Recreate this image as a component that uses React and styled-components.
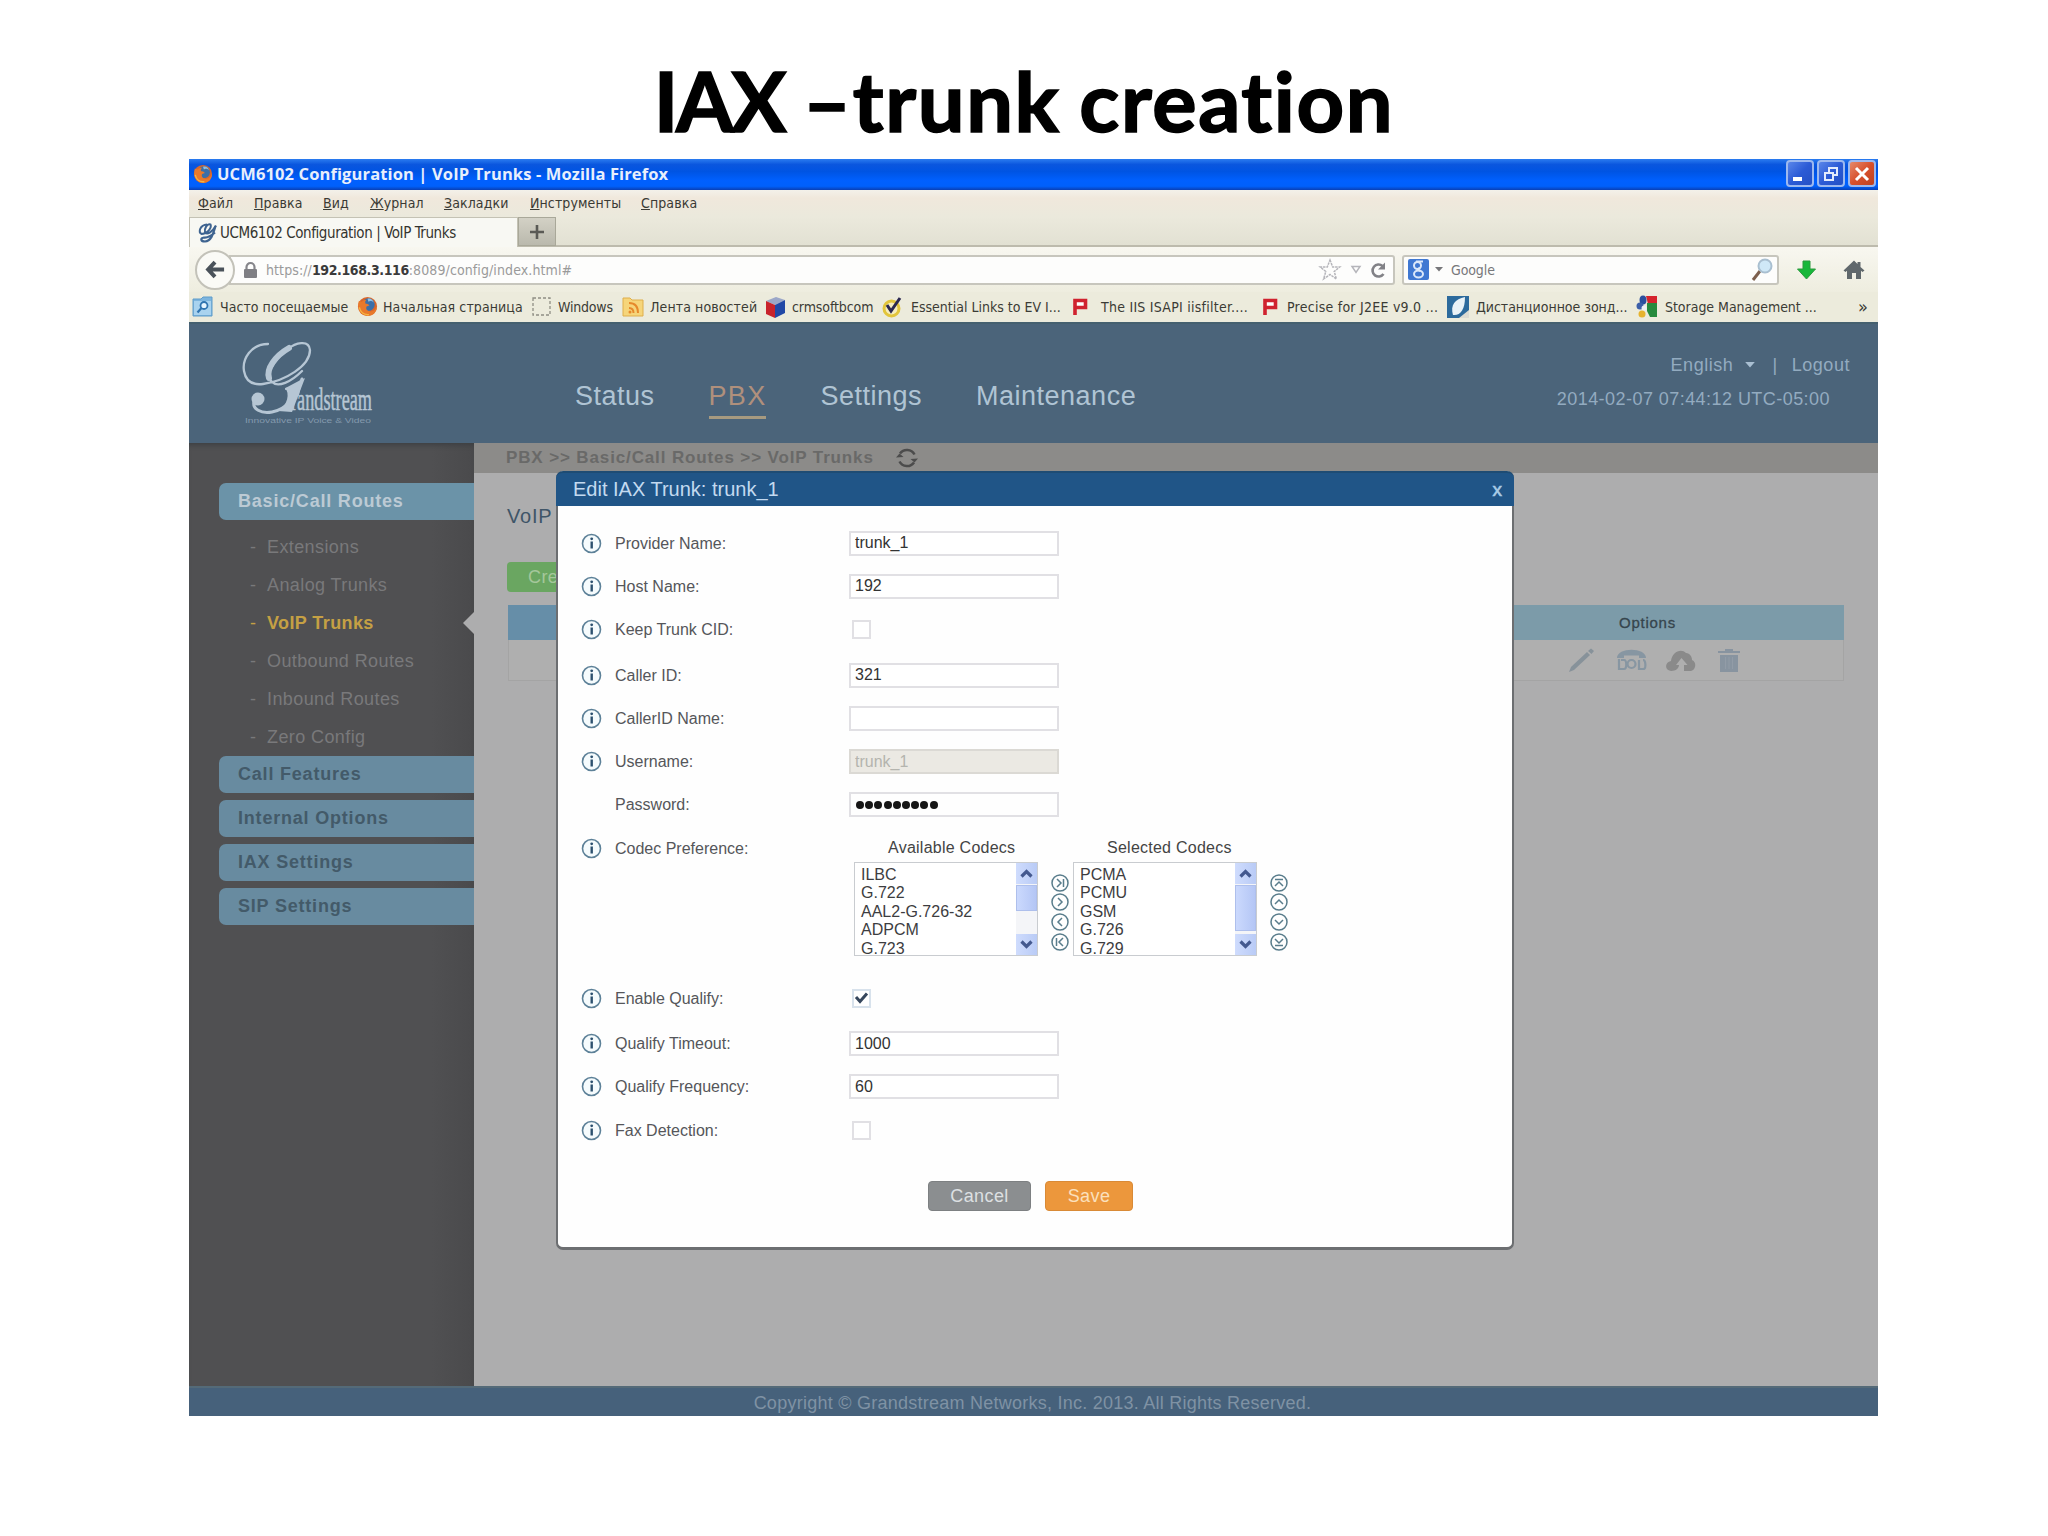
import React, { useState } from 'react';
import styled, { createGlobalStyle, css } from 'styled-components';

const GlobalStyle = createGlobalStyle`
  * { box-sizing: border-box; }
  body { margin: 0; background: #fff; }
  svg { display: block; flex: none; overflow: visible; }
`;

const tahoma = css`
  font-family: 'DejaVu Sans Condensed', 'DejaVu Sans', sans-serif;
  font-stretch: condensed;
`;
const arial = css`
  font-family: 'Liberation Sans', Arial, sans-serif;
`;

const Slide = styled.div`
  width: 2048px;
  height: 1536px;
  overflow: hidden;
  display: flex;
  flex-direction: column;
`;
const SlideTitle = styled.h1`
  margin: 0;
  height: 159px;
  padding-top: 42px;
  text-align: center;
  font: 700 83px/116px Lato, sans-serif;
  letter-spacing: 1.6px;
  word-spacing: -3px;
  color: #000;
  -webkit-text-stroke: 1.6px #000;
  white-space: nowrap;
`;
const Tight = styled.span`
  letter-spacing: -2.5px;
`;

/* ---------- browser ---------- */
const Browser = styled.div`
  position: relative;
  width: 1689px;
  height: 1257px;
  margin-left: 189px;
  display: flex;
  flex-direction: column;
  white-space: nowrap;
`;
const TitleBar = styled.div`
  height: 31px;
  padding: 0 2px 2px 4px;
  display: flex;
  align-items: center;
  background: linear-gradient(#2b7cf0 0, #0a56de 18%, #0054e3 40%, #0060ff 70%, #0060fb 88%, #0a3fb4 100%);
`;
const WindowTitle = styled.div`
  flex: 1;
  margin-left: 4px;
  font: 700 16.5px/28px 'Open Sans', sans-serif;
  letter-spacing: 0.12px;
  color: #e8effc;
`;
const WinButtons = styled.div`
  display: flex;
  gap: 3px;
`;
const WinButton = styled.button`
  width: 28px;
  height: 27px;
  padding: 0;
  display: flex;
  align-items: center;
  justify-content: center;
  border: 2px solid #9db9ef;
  border-radius: 4px;
  background: ${(p) => (p.$close ? 'linear-gradient(135deg, #e58a6c, #d8502c 50%, #bd4120)' : 'linear-gradient(135deg, #5a86ea, #2c5bd6 50%, #2450c4)')};
`;
const MenuBar = styled.div`
  height: 27px;
  padding: 1px 0 0 9px;
  display: flex;
  background: linear-gradient(#f3f1ea 0, #f0e8dc 30%, #ebe9dc 100%);
`;
const MenuItem = styled.div`
  ${tahoma}
  width: ${(p) => p.$w}px;
  font-size: 14px;
  line-height: 24px;
  letter-spacing: 0.1px;
  color: #3a3a34;
  &::first-letter { text-decoration: underline; }
`;
const TabStrip = styled.div`
  height: 30px;
  display: flex;
  background: linear-gradient(#ebe9dc, #e2e1d3);
  border-bottom: 2px solid #bdbbad;
`;
const Tab = styled.div`
  ${tahoma}
  width: 329px;
  height: 30px;
  padding-left: 8px;
  display: flex;
  align-items: center;
  gap: 3px;
  font-size: 15px;
  letter-spacing: -0.42px;
  color: #34342f;
  background: #f8f8f3;
  border: 1px solid #c4c2b4;
  border-bottom: 0;
`;
const NewTab = styled.div`
  width: 38px;
  height: 29px;
  display: flex;
  align-items: center;
  justify-content: center;
  background: linear-gradient(#d3d1c5, #bab9ad);
  border: 1px solid #a9a899;
`;
const NavBar = styled.div`
  height: 45px;
  padding-left: 6px;
  display: flex;
  align-items: center;
  background: linear-gradient(#f8f7f0, #eeeddf);
`;
const BackButton = styled.div`
  width: 40px;
  height: 40px;
  z-index: 1;
  display: flex;
  align-items: center;
  justify-content: center;
  border: 2px solid #c3c2b9;
  border-radius: 50%;
  background: #fafaf6;
`;
const UrlBar = styled.div`
  ${tahoma}
  width: 1166px;
  height: 30px;
  margin-left: -6px;
  padding: 0 7px 0 12px;
  display: flex;
  align-items: center;
  font-size: 14px;
  color: #9a9a9a;
  background: #fdfdfc;
  border: 2px solid #c7c6bd;
  border-radius: 0 3px 3px 0;
  b { color: #3a3a3a; letter-spacing: -0.4px; }
`;
const Address = styled.div`
  flex: 1;
  margin-left: 8px;
  letter-spacing: 0.1px;
`;
const SearchBox = styled(UrlBar)`
  width: 377px;
  margin-left: 7px;
  padding: 0 3px 0 4px;
  color: #77777a;
  border-radius: 3px;
`;
const SearchHint = styled.div`
  flex: 1;
  display: flex;
  align-items: center;
  gap: 8px;
  margin-left: 6px;
  letter-spacing: -0.1px;
`;
const Tools = styled.div`
  display: flex;
  align-items: center;
  gap: 27px;
  margin-left: 18px;
`;
const Bookmarks = styled.div`
  height: 30px;
  padding: 0 0 1px 3px;
  display: flex;
  align-items: center;
  background: #ecebdc;
`;
const Bookmark = styled.div`
  ${tahoma}
  flex: none;
  width: ${(p) => p.$w}px;
  display: flex;
  align-items: center;
  gap: ${(p) => p.$gap || 5}px;
  font-size: 14px;
  letter-spacing: ${(p) => p.$ls || 0}px;
  color: #3b3b35;
`;
const More = styled.div`
  ${tahoma}
  font-size: 18px;
  line-height: 20px;
  color: #3b3b35;
`;

/* ---------- UCM page ---------- */
const Header = styled.div`
  ${arial}
  height: 121px;
  padding: 0 28px 0 52px;
  display: flex;
  background: #4b647a;
  border-top: 2px solid #45606f;
`;
const LogoBox = styled.div`
  width: 136px;
  padding-top: 17px;
`;
const Nav = styled.div`
  display: flex;
  padding: 57px 0 0 198px;
`;
const NavItem = styled.div`
  height: 38px;
  margin-right: ${(p) => p.$gap}px;
  font-size: 27px;
  line-height: 31px;
  letter-spacing: ${(p) => (p.$active ? 1.3 : 0.5)}px;
  color: ${(p) => (p.$active ? '#b0907c' : '#b0c4d4')};
  border-bottom: ${(p) => (p.$active ? '3px solid #a79a80' : '0')};
`;
const Account = styled.div`
  margin-left: auto;
  padding-top: 27px;
  display: flex;
  flex-direction: column;
  color: #93abc0;
  font-size: 18px;
`;
const AccountLine = styled.div`
  height: 28px;
  line-height: 28px;
  display: flex;
  align-items: center;
  justify-content: flex-end;
  letter-spacing: 0.55px;
`;
const Clock = styled.div`
  height: 40px;
  line-height: 40px;
  padding-right: 20px;
  letter-spacing: 0.45px;
`;
const Caret = styled.span`
  margin-left: 12px;
`;
const Divider = styled.span`
  margin: 0 14px 0 17px;
`;
const Main = styled.div`
  ${arial}
  flex: 1;
  display: flex;
`;
const Sidebar = styled.div`
  width: 285px;
  padding: 40px 0 0 30px;
  background: linear-gradient(90deg, #505052 85%, #4a4a4c);
  box-shadow: inset 0 5px 5px -3px #3c3f42;
`;
const Section = styled.div`
  height: 37px;
  margin-bottom: ${(p) => (p.$open ? 8 : 7)}px;
  padding-left: 19px;
  font-size: 18px;
  font-weight: 700;
  line-height: 36px;
  letter-spacing: 0.8px;
  color: ${(p) => (p.$open ? '#bccad4' : '#435a69')};
  background: ${(p) => (p.$open ? '#6b93a8' : '#688ba0')};
  border-radius: 7px 0 0 7px;
`;
const SubItem = styled.div`
  height: 38px;
  padding-left: 31px;
  display: flex;
  align-items: center;
  font-size: 18px;
  letter-spacing: 0.4px;
  color: ${(p) => (p.$active ? '#c5a044' : '#79797b')};
  font-weight: ${(p) => (p.$active ? 700 : 400)};
`;
const Dash = styled.span`
  width: 17px;
  font-weight: 400;
`;
const Pointer = styled.div`
  margin-left: auto;
  border: 11px solid transparent;
  border-left: 0;
  border-right-color: #adadae;
`;
const Content = styled.div`
  flex: 1;
  background: #adadae;
`;
const Breadcrumb = styled.div`
  height: 30px;
  padding-left: 32px;
  display: flex;
  align-items: center;
  gap: 22px;
  font-size: 17px;
  font-weight: 700;
  letter-spacing: 0.87px;
  color: #696968;
  background: #8c8b89;
`;
const Panel = styled.div`
  padding: 27px 34px 0 33px;
`;
const PanelTitle = styled.div`
  height: 32px;
  line-height: 32px;
  font-size: 20px;
  letter-spacing: 0.8px;
  color: #3f5568;
`;
const CreateButton = styled.div`
  width: 180px;
  height: 30px;
  margin: 30px 0 13px;
  padding-left: 21px;
  line-height: 30px;
  font-size: 18px;
  letter-spacing: 0.4px;
  color: #a5c79b;
  background: #6aa661;
  border-radius: 4px;
`;
const TableHead = styled.div`
  height: 35px;
  margin-left: 1px;
  padding-left: 1000px;
  display: flex;
  align-items: center;
  background: linear-gradient(90deg, #668ea8 10%, #7c9ba9 70%);
`;
const OptionsHead = styled.div`
  width: 279px;
  text-align: center;
  font-size: 15px;
  letter-spacing: 0.75px;
  color: #36454d;
  -webkit-text-stroke: 0.3px #36454d;
`;
const TableRow = styled.div`
  height: 41px;
  margin-left: 1px;
  padding-left: 1059px;
  display: flex;
  align-items: center;
  background: #afafaf;
  border: 1px solid #a4a4a4;
  border-top: 0;
`;
const RowIcon = styled.div`
  width: ${(p) => p.$w}px;
`;
const Footer = styled.div`
  ${arial}
  height: 30px;
  padding-right: 2px;
  text-align: center;
  line-height: 31px;
  font-size: 18px;
  letter-spacing: 0.25px;
  color: #7f92a4;
  background: #46617b;
  border-top: 2px solid #546a78;
`;

/* ---------- dialog ---------- */
const Dialog = styled.div`
  ${arial}
  position: absolute;
  left: 367px;
  top: 312px;
  width: 958px;
  height: 779px;
  border: solid #6c6e71;
  border-width: 0 2px 3px 2px;
  border-radius: 7px;
  background: #fefefe;
`;
const DialogTitle = styled.div`
  height: 35px;
  margin: 0 -2px;
  padding: 0 12px 0 17px;
  display: flex;
  align-items: center;
  justify-content: space-between;
  font-size: 20px;
  color: #c3daf0;
  background: #205587;
  border-top: 2px solid #1e4c74;
  border-radius: 7px 7px 0 0;
`;
const Close = styled.span`
  font-size: 19px;
  color: #a9cbe6;
  -webkit-text-stroke: 0.6px #a9cbe6;
`;
const Form = styled.div`
  padding: 24.5px 0 0 23px;
`;
const Row = styled.div`
  height: ${(p) => p.$h || 43.2}px;
  display: flex;
`;
const Hint = styled.div`
  width: 34px;
  height: 25px;
  padding-top: 2px;
`;
const Label = styled.div`
  width: 234px;
  height: 25px;
  line-height: 26px;
  font-size: 16px;
  color: #55565a;
`;
const TextInput = styled.input`
  ${arial}
  width: 210px;
  height: 25px;
  padding: 0 4px;
  font-size: 16px;
  color: #333;
  background: #fff;
  border: 2px solid #e1e0e4;
  outline: none;
  &:disabled { color: #b4b4ae; background: #ebe9e3; border-color: #dbd9d4; }
`;
const Dots = styled.div`
  width: 210px;
  height: 25px;
  padding-left: 5px;
  display: flex;
  align-items: center;
  gap: 1.2px;
  border: 2px solid #e1e0e4;
`;
const Dot = styled.i`
  width: 8px;
  height: 8px;
  border-radius: 50%;
  background: #161616;
`;
const Check = styled.div`
  width: 19px;
  height: 19px;
  margin: 3px 0 0 3px;
  display: flex;
  align-items: center;
  justify-content: center;
  border: 2px solid ${(p) => (p.$on ? '#d8e2ec' : '#e1e0e4')};
  background: #fff;
`;
const Codecs = styled.div`
  display: flex;
  padding-left: 5px;
`;
const CodecColumn = styled.div`
  width: 184px;
`;
const CodecTitle = styled.div`
  height: 26px;
  padding-left: 34px;
  line-height: 24px;
  font-size: 16px;
  letter-spacing: 0.25px;
  color: #444;
`;
const ListBox = styled.div`
  height: 94px;
  display: flex;
  justify-content: space-between;
  border: 1px solid #c9ccd0;
  background: #fff;
`;
const Options = styled.div`
  padding: 5px 0 0 6px;
  display: flex;
  flex-direction: column;
  gap: 4.5px;
`;
const Option = styled.div`
  height: 14px;
  line-height: 14px;
  font-size: 16px;
  color: #3d3d3f;
`;
const Scroll = styled.div`
  width: 21px;
  display: flex;
  flex-direction: column;
  background: #f4f5f8;
`;
const ScrollButton = styled.div`
  height: 21px;
  display: flex;
  align-items: center;
  justify-content: center;
  background: linear-gradient(90deg, #cfdcfd, #b9cbf6);
`;
const Thumb = styled.div`
  height: ${(p) => p.$h}px;
  margin-top: 1px;
  margin-bottom: auto;
  background: linear-gradient(90deg, #cbd9fd, #b4c6f5);
  border: 1px solid #aebfec;
`;
const Movers = styled.div`
  width: 35px;
  padding: 38px 0 0 13px;
  display: flex;
  flex-direction: column;
  gap: 1.8px;
`;
const Actions = styled.div`
  padding: 20px 0 0 347px;
  display: flex;
  gap: 14px;
`;
const Button = styled.button`
  ${arial}
  width: ${(p) => p.$w}px;
  height: 30px;
  padding: 0;
  font-size: 18px;
  line-height: 28px;
  letter-spacing: 0.4px;
  color: ${(p) => (p.$primary ? '#fbe0bc' : '#dde0e2')};
  background: ${(p) => (p.$primary ? '#ec973c' : '#8b8e90')};
  border: 1px solid ${(p) => (p.$primary ? '#d98a36' : '#7d8082')};
  border-radius: 4px;
`;

/* ---------- icons ---------- */
const Firefox = ({ size = 21 }) => (
  <svg width={size} height={size} viewBox="0 0 22 22">
    <circle cx="11" cy="11" r="10" fill="#d9662a" />
    <circle cx="12" cy="9" r="6.6" fill="#3b6fa8" />
    <path d="M11 3c3-1 6 1 6.500 4c-2-2-4-2-5.500-1z" fill="#8fc0e2" />
    <path d="M2 5c-2 7 0 15 9 16c6 0 10-4 10-11c-1 4-4 7-8 6c-3-0.500-4-3-3-5l3-1c-1-2-3-2-4-2c-1-2 0-3 1-4c-3 0-4 1-5 2z" fill="#e8792b" />
    <path d="M2.500 12c1 5 5 8 10 7.500" stroke="#f6b541" strokeWidth="1.500" fill="none" />
  </svg>
);
const TabLogo = () => (
  <svg width="19" height="20" viewBox="0 0 19 20" fill="none" stroke="#3e6390" strokeWidth="2">
    <path d="M9 1.500C2 2 0 9 3.500 11C9 11 14 5 12.500 1.500C9 0 6 6 7 9.500c2 2.500 7 0 11-7" />
    <path d="M17.500 3C15.500 9 14 18 7 18.500C2 18.500 2.500 15 6 14.500c4 0.500 7-1.500 11-5" strokeWidth="2.200" />
  </svg>
);
const Folder = () => (
  <svg width="22" height="21" viewBox="0 0 22 21">
    <path d="M1 3h8l2-2h9v19H1z" fill="#7db5de" stroke="#5f9cca" />
    <path d="M2 5h17v14H2z" fill="#a9d3ef" />
    <circle cx="12" cy="9.500" r="3.500" fill="#e6f5ff" stroke="#2f74b0" strokeWidth="1.800" />
    <path d="M9.500 12l-4 4.500" stroke="#2f74b0" strokeWidth="2.200" />
  </svg>
);
const DashedPage = () => (
  <svg width="20" height="20" viewBox="0 0 20 20">
    <rect x="1" y="1" width="17" height="17" fill="none" stroke="#8f8e84" strokeWidth="1.300" strokeDasharray="3 2" />
  </svg>
);
const Rss = () => (
  <svg width="22" height="21" viewBox="0 0 22 21">
    <path d="M1 2h7l2 2h11v16H1z" fill="#f6d57a" stroke="#dfae4a" />
    <g fill="none" stroke="#e6892b" strokeWidth="2">
      <path d="M7 7c6 0 9 4 9 10M7 12c3 0 4.500 2 4.500 5" />
    </g>
    <circle cx="8" cy="16" r="1.500" fill="#e6892b" />
  </svg>
);
const Cube = () => (
  <svg width="21" height="22" viewBox="0 0 21 22">
    <path d="M1 5l10-4l9 3l-10 5z" fill="#9ba7c8" />
    <path d="M1 5l9 4v13l-9-4z" fill="#c8232c" />
    <path d="M10 9l10-5v13l-10 5z" fill="#2148a6" />
  </svg>
);
const CheckBadge = () => (
  <svg width="21" height="22" viewBox="0 0 21 22">
    <circle cx="9.500" cy="12.500" r="7.500" fill="#f6edbd" stroke="#e2c53c" strokeWidth="3" />
    <path d="M5 9l4 6l9-13" fill="none" stroke="#2b2850" strokeWidth="3" />
  </svg>
);
const RedP = () => (
  <svg width="17" height="17" viewBox="0 0 17 17">
    <path d="M3 17V2.500H13.500V9.500H4" fill="#fff" stroke="#d0222f" strokeWidth="3.600" />
  </svg>
);
const BlueLeaf = () => (
  <svg width="22" height="22" viewBox="0 0 22 22">
    <rect width="22" height="22" fill="#2c6a9c" />
    <path d="M18 1C8 3 3 9 6 19c7 1 12-5 12-18z" fill="#e9f2f7" />
    <path d="M12 22l10-8v8z" fill="#dcdbd2" />
  </svg>
);
const Storage = () => (
  <svg width="22" height="23" viewBox="0 0 22 23">
    <path d="M10 1h11v8H12z" fill="#d5242d" />
    <path d="M11 8h10v14h-7l-3-6z" fill="#278a3d" />
    <ellipse cx="7" cy="5" rx="3.500" ry="4.500" fill="#2b4f9e" />
    <circle cx="4" cy="11" r="3.500" fill="#3c5fa8" />
    <circle cx="8" cy="13" r="2.500" fill="#eef0f4" />
    <circle cx="6" cy="19" r="3.500" fill="#e6b32e" />
  </svg>
);
const Lock = () => (
  <svg width="15" height="16" viewBox="0 0 15 16">
    <path d="M3.500 8V5a4 4 0 0 1 8 0v3" fill="none" stroke="#85858a" strokeWidth="2.200" />
    <rect x="1" y="7" width="13" height="9" rx="1" fill="#7f7f84" />
  </svg>
);
const BackArrow = () => (
  <svg width="20" height="19" viewBox="0 0 22 20" fill="none" stroke="#4a525a" strokeWidth="4.400">
    <path d="M11 2L3.500 10L11 18M4 10h17" />
  </svg>
);
const UrlIcons = () => (
  <svg width="68" height="24" viewBox="0 0 68 24" fill="none" stroke="#b5b5ba" strokeWidth="1.500">
    <path d="M12 2l2.700 7h7l-5.500 4.500l2.200 7.500L12 16.500L5.600 21l2.200-7.500L2.300 9h7z" strokeDasharray="2.500 0.800" />
    <path d="M34 8.500h8l-4 6z" />
    <path d="M64.500 8a6 6 0 1 0 1 8" stroke="#828287" strokeWidth="2.600" />
    <path d="M60 11.500h7V4.500z" fill="#828287" stroke="none" />
  </svg>
);
const GoogleMark = () => (
  <svg width="21" height="21" viewBox="0 0 21 21">
    <rect width="21" height="21" rx="2" fill="#3f78d2" />
    <g fill="none" stroke="#dbe8fa" strokeWidth="2">
      <ellipse cx="9.500" cy="6.500" rx="3.500" ry="3.500" />
      <ellipse cx="10.500" cy="15" rx="4.500" ry="3.500" />
      <path d="M8 2.500h7M12 9c-3 1-2 2 0 3" />
    </g>
  </svg>
);
const SmallCaret = ({ color = '#77777a', w = 8 }) => (
  <svg width={w} height={w / 2 + 1} viewBox="0 0 8 5">
    <path d="M0 0h8L4 4.500z" fill={color} />
  </svg>
);
const Magnifier = () => (
  <svg width="23" height="24" viewBox="0 0 23 24">
    <path d="M9 13l-7 9" stroke="#7c5f4d" strokeWidth="3" />
    <circle cx="14" cy="8" r="6.500" fill="#cfe8f7" stroke="#a9bfd0" strokeWidth="2" />
  </svg>
);
const Download = () => (
  <svg width="19" height="20" viewBox="0 0 19 20">
    <path d="M6 1h7v8h5.500L9.500 19L0.500 9H6z" fill="#18b73a" stroke="#2a9a3c" />
  </svg>
);
const Home = () => (
  <svg width="22" height="20" viewBox="0 0 22 20">
    <path d="M11 0.500L0.500 10.500l2 1.500L4 10.800V19h5v-6h4v6h5v-8.200l1.500 1.200l2-1.500L17.500 7V2h-3v2z" fill="#60686c" />
  </svg>
);
const GrandstreamLogo = () => (
  <svg width="136" height="85" viewBox="0 0 136 85">
    <g fill="none" stroke="#b6c6d4" strokeLinecap="round">
      <path d="M27 3C10 3 1 18 3 30c2 12 11 14 19 13C44 40 69 25 69 9C68 -2 54 2 47 8C31 20 24 34 31 41c6 6 19 0 30-11" strokeWidth="2.300" />
      <path d="M48 7C34 15 25 28 28 37" strokeWidth="6" />
      <path d="M61 38C55 55 47 68 31 71C20 73 11 68 13 60" strokeWidth="3" />
      <path d="M45 48l15-8l-3 14" strokeWidth="2" />
    </g>
    <path d="M64 37C58 41 51 46 44 47c5 5 3 17-7 23l14 1z" fill="#b6c6d4" />
    <circle cx="17" cy="58" r="6.500" fill="#b6c6d4" />
    <text x="50" y="69" textLength="81" lengthAdjust="spacingAndGlyphs" fontFamily="Liberation Serif, serif" fontSize="31" fill="#b6c6d4" stroke="#b6c6d4" strokeWidth="0.500">randstream</text>
    <text x="4" y="82" textLength="126" lengthAdjust="spacingAndGlyphs" fontFamily="Liberation Sans, sans-serif" fontSize="7.500" fill="#8399ad">Innovative IP Voice &amp; Video</text>
  </svg>
);
const Refresh = () => (
  <svg width="22" height="22" viewBox="0 0 22 22" fill="none" stroke="#4c4c4c" strokeWidth="2.500">
    <path d="M4 6.500a8.500 8.500 0 0 1 14.500 1M18 15.500A8.500 8.500 0 0 1 3.500 14.500" />
    <path d="M0 10.500l3.500-4l4 3.500zM22 11.500l-3.500 4l-4-3.500z" fill="#4c4c4c" stroke="none" />
  </svg>
);
const Pencil = () => (
  <svg width="27" height="25" viewBox="0 0 27 25" fill="#87929a">
    <path d="M1 24l2-5L19 4l3 3L6 22z" />
    <path d="M20 3l3-2.500L26 3l-2.500 3z" />
  </svg>
);
const Phone = () => (
  <svg width="31" height="22" viewBox="0 0 31 22">
    <path d="M1 9C1 -2 30 -2 30 9h-7V6.500H8V9z" fill="#8796a2" />
    <g fill="none" stroke="#8796a2" strokeWidth="2.200">
      <path d="M3 10v10h5c3 0 3-9 0-9H5M23 11v9h5c2-1 2-9-1-9" />
      <circle cx="15.500" cy="15" r="4" />
    </g>
  </svg>
);
const CloudUp = () => (
  <svg width="31" height="23" viewBox="0 0 31 23" fill="#8a8a8a">
    <path d="M6 22C-1 21 0 13 6 12C7 3 16-1 21 4c4 0 6 4 6 7c5 2 4 10-1 11h-7v-6h3.500L16.500 9L11 16h3c0 3-3 6-8 6z" />
  </svg>
);
const Trash = () => (
  <svg width="22" height="23" viewBox="0 0 22 23" fill="#8894a0">
    <path d="M0 2h7V0h8v2h7v2H0zM2 6h18v17H2z" />
    <path d="M7.500 8v12M11 8v12M14.500 8v12" stroke="#929ca7" />
  </svg>
);
const Info = () => (
  <svg width="21" height="21" viewBox="0 0 21 21">
    <circle cx="10.500" cy="10.500" r="9" fill="#f5fbfd" stroke="#5d8198" strokeWidth="1.600" />
    <path d="M10.700 8.500v7" stroke="#2c506e" strokeWidth="2.400" />
    <circle cx="10.700" cy="5.800" r="1.400" fill="#2c506e" />
  </svg>
);
const Mark = () => (
  <svg width="13" height="12" viewBox="0 0 13 12">
    <path d="M1 5l4 4.500L12 1.500" fill="none" stroke="#35465c" strokeWidth="3" />
  </svg>
);
const Chevron = ({ down }) => (
  <svg width="13" height="9" viewBox="0 0 13 9" fill="none" stroke="#44598f" strokeWidth="3.200">
    <path d={down ? 'M1.500 1.500l5 5l5-5' : 'M1.500 7.500l5-5l5 5'} />
  </svg>
);
const moverPaths = {
  last: 'M6 5l4 4l-4 4M12.500 5v8',
  right: 'M7 5l4 4l-4 4',
  left: 'M11 5L7 9l4 4',
  first: 'M12 5L8 9l4 4M5.500 5v8',
  top: 'M5 5.500h8M5 12l4-4l4 4',
  up: 'M5 11l4-4l4 4',
  down: 'M5 7l4 4l4-4',
  bottom: 'M5 6l4 4l4-4M5 12.500h8',
};
const Mover = ({ kind }) => (
  <svg width="18" height="18" viewBox="0 0 18 18" fill="none" stroke="#587c8b" strokeWidth="1.500">
    <circle cx="9" cy="9" r="8" />
    <path d={moverPaths[kind]} />
  </svg>
);

/* ---------- data ---------- */
const menu = [['Файл', 56], ['Правка', 69], ['Вид', 47], ['Журнал', 74], ['Закладки', 86], ['Инструменты', 111], ['Справка', 60]];

const bookmarks = [
  { icon: <Folder />, text: 'Часто посещаемые', w: 165, ls: 0.05, gap: 6 },
  { icon: <Firefox />, text: 'Начальная страница', w: 175, ls: 0.1 },
  { icon: <DashedPage />, text: 'Windows', w: 90, ls: -0.2, gap: 6 },
  { icon: <Rss />, text: 'Лента новостей', w: 143, ls: 0.1, gap: 6 },
  { icon: <Cube />, text: 'crmsoftbcom', w: 117, ls: -0.1, gap: 6 },
  { icon: <CheckBadge />, text: 'Essential Links to EV I...', w: 190, ls: 0, gap: 8 },
  { icon: <RedP />, text: 'The IIS ISAPI iisfilter....', w: 190, ls: 0.25, gap: 12 },
  { icon: <RedP />, text: 'Precise for J2EE v9.0 ...', w: 185, ls: 0.25, gap: 8 },
  { icon: <BlueLeaf />, text: 'Дистанционное зонд...', w: 189, ls: -0.03, gap: 7 },
  { icon: <Storage />, text: 'Storage Management ...', w: 222, ls: -0.03, gap: 7 },
];

const subItems = ['Extensions', 'Analog Trunks', 'VoIP Trunks', 'Outbound Routes', 'Inbound Routes', 'Zero Config'];
const sections = ['Call Features', 'Internal Options', 'IAX Settings', 'SIP Settings'];

const available = ['ILBC', 'G.722', 'AAL2-G.726-32', 'ADPCM', 'G.723'];
const selected = ['PCMA', 'PCMU', 'GSM', 'G.726', 'G.729'];

function CodecList({ title, items, thumb }) {
  return (
    <CodecColumn>
      <CodecTitle>{title}</CodecTitle>
      <ListBox>
        <Options>
          {items.map((item) => <Option key={item}>{item}</Option>)}
        </Options>
        <Scroll>
          <ScrollButton><Chevron /></ScrollButton>
          <Thumb $h={thumb} />
          <ScrollButton><Chevron down /></ScrollButton>
        </Scroll>
      </ListBox>
    </CodecColumn>
  );
}

function Field({ label, h, noHint, children }) {
  return (
    <Row $h={h}>
      <Hint>{noHint ? null : <Info />}</Hint>
      <Label>{label}</Label>
      {children}
    </Row>
  );
}

function EditTrunk() {
  const [form, setForm] = useState({ name: 'trunk_1', host: '192', cid: '321', cidName: '', timeout: '1000', frequency: '60' });
  const bind = (key) => ({
    value: form[key],
    onChange: (e) => setForm({ ...form, [key]: e.target.value }),
  });
  return (
    <Dialog>
      <DialogTitle>
        <span>Edit IAX Trunk: trunk_1</span>
        <Close>x</Close>
      </DialogTitle>
      <Form>
        <Field label="Provider Name:"><TextInput {...bind('name')} /></Field>
        <Field label="Host Name:"><TextInput {...bind('host')} /></Field>
        <Field label="Keep Trunk CID:" h={46}><Check /></Field>
        <Field label="Caller ID:"><TextInput {...bind('cid')} /></Field>
        <Field label="CallerID Name:"><TextInput {...bind('cidName')} /></Field>
        <Field label="Username:"><TextInput disabled value="trunk_1" /></Field>
        <Field label="Password:" noHint>
          <Dots>{Array.from({ length: 9 }, (_, i) => <Dot key={i} />)}</Dots>
        </Field>
        <Field label="Codec Preference:" h={150}>
          <Codecs>
            <CodecList title="Available Codecs" items={available} thumb={26} />
            <Movers>
              {['last', 'right', 'left', 'first'].map((k) => <Mover key={k} kind={k} />)}
            </Movers>
            <CodecList title="Selected Codecs" items={selected} thumb={46} />
            <Movers>
              {['top', 'up', 'down', 'bottom'].map((k) => <Mover key={k} kind={k} />)}
            </Movers>
          </Codecs>
        </Field>
        <Field label="Enable Qualify:" h={45.6}><Check $on><Mark /></Check></Field>
        <Field label="Qualify Timeout:"><TextInput {...bind('timeout')} /></Field>
        <Field label="Qualify Frequency:"><TextInput {...bind('frequency')} /></Field>
        <Field label="Fax Detection:"><Check /></Field>
        <Actions>
          <Button $w={103}>Cancel</Button>
          <Button $w={88} $primary>Save</Button>
        </Actions>
      </Form>
    </Dialog>
  );
}

function Chrome() {
  return (
    <>
      <TitleBar>
        <Firefox size={20} />
        <WindowTitle>UCM6102 Configuration | VoIP Trunks - Mozilla Firefox</WindowTitle>
        <WinButtons>
          <WinButton>
            <svg width="20" height="20"><path d="M3 15h9" stroke="#fff" strokeWidth="4" /></svg>
          </WinButton>
          <WinButton>
            <svg width="20" height="20" fill="none" stroke="#e3ebfc" strokeWidth="2">
              <path d="M4 9h8v7H4zM8 8V4h8v7h-3" />
            </svg>
          </WinButton>
          <WinButton $close>
            <svg width="20" height="20"><path d="M4 4l12 12M16 4L4 16" stroke="#fff" strokeWidth="3" /></svg>
          </WinButton>
        </WinButtons>
      </TitleBar>
      <MenuBar>
        {menu.map(([text, w]) => <MenuItem key={text} $w={w}>{text}</MenuItem>)}
      </MenuBar>
      <TabStrip>
        <Tab><TabLogo />UCM6102 Configuration | VoIP Trunks</Tab>
        <NewTab>
          <svg width="14" height="14"><path d="M7 0v14M0 7h14" stroke="#5a5a55" strokeWidth="2.600" /></svg>
        </NewTab>
      </TabStrip>
      <NavBar>
        <BackButton><BackArrow /></BackButton>
        <UrlBar>
          <Lock />
          <Address>https://<b>192.168.3.116</b>:8089/config/index.html#</Address>
          <UrlIcons />
        </UrlBar>
        <SearchBox>
          <GoogleMark />
          <SearchHint><SmallCaret />Google</SearchHint>
          <Magnifier />
        </SearchBox>
        <Tools><Download /><Home /></Tools>
      </NavBar>
      <Bookmarks>
        {bookmarks.map((b) => (
          <Bookmark key={b.text} $w={b.w} $ls={b.ls} $gap={b.gap}>{b.icon}{b.text}</Bookmark>
        ))}
        <More>»</More>
      </Bookmarks>
    </>
  );
}

export default function App() {
  return (
    <Slide>
      <GlobalStyle />
      <SlideTitle><Tight>IAX</Tight> –trunk creation</SlideTitle>
      <Browser>
        <Chrome />
        <Header>
          <LogoBox><GrandstreamLogo /></LogoBox>
          <Nav>
            <NavItem $gap={54}>Status</NavItem>
            <NavItem $gap={54} $active>PBX</NavItem>
            <NavItem $gap={54}>Settings</NavItem>
            <NavItem $gap={0}>Maintenance</NavItem>
          </Nav>
          <Account>
            <AccountLine>
              English<Caret><SmallCaret color="#a9bfd2" w={10} /></Caret><Divider>|</Divider>Logout
            </AccountLine>
            <Clock>2014-02-07 07:44:12 UTC-05:00</Clock>
          </Account>
        </Header>
        <Main>
          <Sidebar>
            <Section $open>Basic/Call Routes</Section>
            {subItems.map((item) => (
              <SubItem key={item} $active={item === 'VoIP Trunks'}>
                <Dash>-</Dash>{item}
                {item === 'VoIP Trunks' && <Pointer />}
              </SubItem>
            ))}
            {sections.map((s) => <Section key={s}>{s}</Section>)}
          </Sidebar>
          <Content>
            <Breadcrumb>PBX &gt;&gt; Basic/Call Routes &gt;&gt; VoIP Trunks<Refresh /></Breadcrumb>
            <Panel>
              <PanelTitle>VoIP</PanelTitle>
              <CreateButton>Create</CreateButton>
              <TableHead><OptionsHead>Options</OptionsHead></TableHead>
              <TableRow>
                <RowIcon $w={48}><Pencil /></RowIcon>
                <RowIcon $w={49}><Phone /></RowIcon>
                <RowIcon $w={53}><CloudUp /></RowIcon>
                <RowIcon $w={22}><Trash /></RowIcon>
              </TableRow>
            </Panel>
          </Content>
        </Main>
        <Footer>Copyright © Grandstream Networks, Inc. 2013. All Rights Reserved.</Footer>
        <EditTrunk />
      </Browser>
    </Slide>
  );
}
